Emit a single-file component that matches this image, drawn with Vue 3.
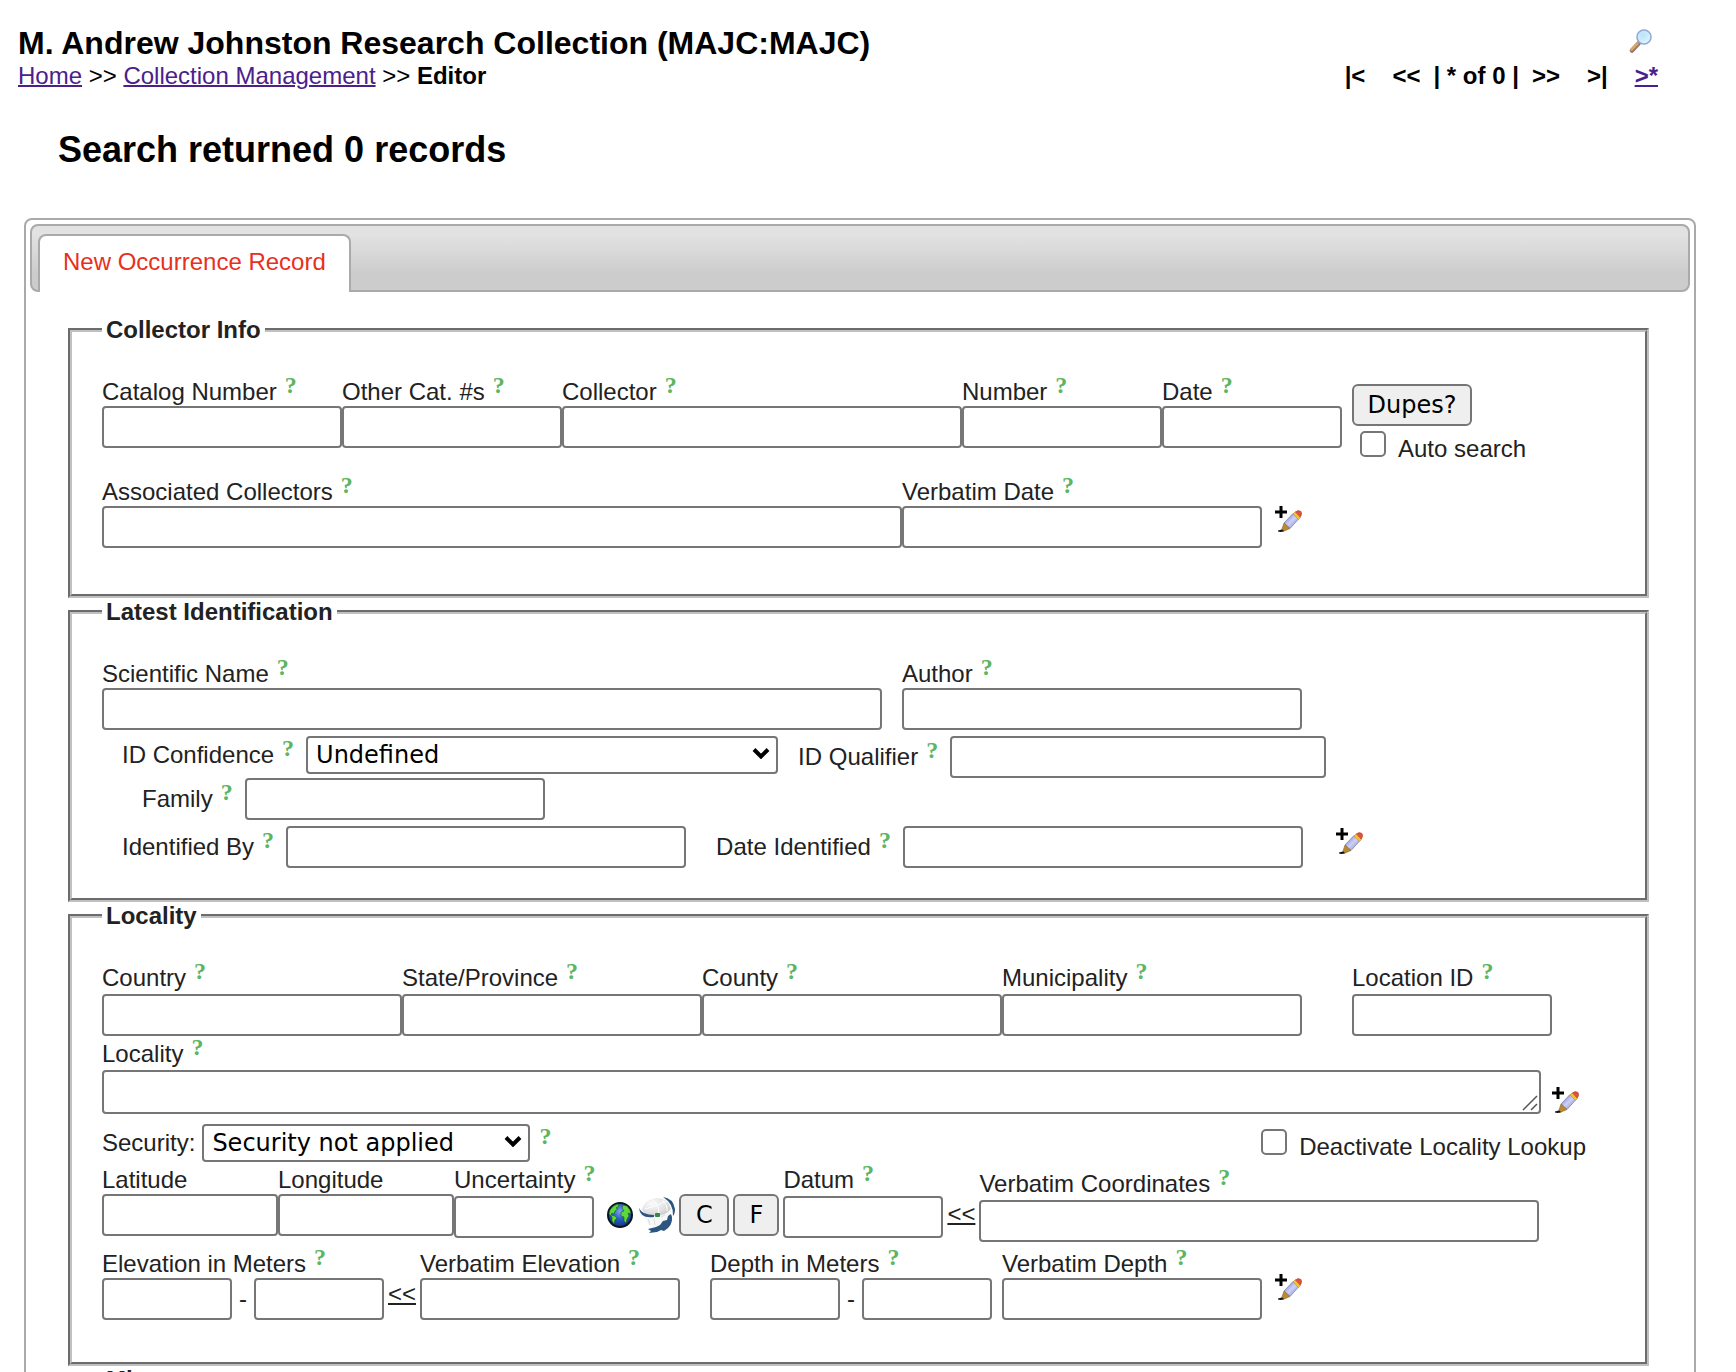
<script setup>
import { ref } from 'vue'

const collectorFields = [
  { id: 'catalognumber', label: 'Catalog Number', width: 240 },
  { id: 'othercatalognumbers', label: 'Other Cat. #s', width: 220 },
  { id: 'recordedby', label: 'Collector', width: 400 },
  { id: 'recordnumber', label: 'Number', width: 200 },
  { id: 'eventdate', label: 'Date', width: 180 },
]

const placeFields = [
  { id: 'country', label: 'Country' },
  { id: 'stateprovince', label: 'State/Province' },
  { id: 'county', label: 'County' },
  { id: 'municipality', label: 'Municipality' },
]

const confidence = ref('Undefined')
const security = ref('Security not applied')
const autoSearch = ref(false)
const deactivateLookup = ref(false)
</script>

<template>
  <div class="page">
    <svg class="sprite" width="0" height="0" aria-hidden="true">
      <defs>
        <linearGradient id="pencilBody" x1="0" y1="0" x2="1" y2="1">
          <stop offset="0.2" stop-color="#8f94d0" />
          <stop offset="0.5" stop-color="#cdd0f8" />
          <stop offset="0.9" stop-color="#8b8ec4" />
        </linearGradient>
        <symbol id="icon-edit" viewBox="0 0 28 28">
          <path d="M7 1v12M1 7h12" stroke="#000" stroke-width="3" />
          <path d="M10 18 19 8.500 25 13.500 16 23.500Z" fill="url(#pencilBody)" stroke="#7f82b0" stroke-width="0.800" />
          <path d="M19 9 21.500 6.500 27 12 24.500 14.500Z" fill="#f0c23a" stroke="#c8902a" stroke-width="0.600" />
          <path d="M21.500 7Q24 4.500 27 6.500Q29 9.500 26 12Z" fill="#e0523c" stroke="#b8463a" stroke-width="0.600" />
          <path d="M10 18 16 23.500 9 26.500 7.500 25.500Z" fill="#b98a34" stroke="#8a6420" stroke-width="0.600" />
          <path d="M4 25.500 8 24.500 10 26Q7 27.500 4 26.500Z" fill="#111" />
        </symbol>
        <symbol id="icon-chevron" viewBox="0 0 18 11">
          <path d="M2 1.500 9 8.500 16 1.500" fill="none" stroke="#000" stroke-width="4" />
        </symbol>
      </defs>
    </svg>

    <header class="top">
      <div>
        <h1>M. Andrew Johnston Research Collection (MAJC:MAJC)</h1>
        <nav class="crumbs" aria-label="Breadcrumb">
          <a href="#home">Home</a> &gt;&gt; <a href="#management">Collection Management</a> &gt;&gt; <b>Editor</b>
        </nav>
      </div>
      <div class="pager-block">
        <a class="search" href="#search" aria-label="Search">
          <svg width="24" height="24" viewBox="0 0 24 24">
            <defs>
              <radialGradient id="lens" cx="0.400" cy="0.350" r="0.700">
                <stop offset="0" stop-color="#b9e2fb" />
                <stop offset="0.600" stop-color="#cdeefd" />
                <stop offset="1" stop-color="#f2fbff" />
              </radialGradient>
            </defs>
            <path d="M9.500 14.500 3 21.500" stroke="#8d7a78" stroke-width="4.500" stroke-linecap="round" />
            <path d="M8.500 14.500 2.500 20.500" stroke="#e3a45a" stroke-width="2.500" stroke-linecap="round" />
            <circle cx="15" cy="8" r="7" fill="url(#lens)" stroke="#93a9cf" stroke-width="1.600" />
          </svg>
        </a>
        <nav class="pager" aria-label="Records">
          <span>|&lt;</span>
          <span>&lt;&lt;</span>
          <span class="count">| * of 0 |</span>
          <span>&gt;&gt;</span>
          <span>&gt;|</span>
          <a href="#new">&gt;*</a>
        </nav>
      </div>
    </header>

    <h2>Search returned 0 records</h2>

    <main class="tabs">
      <div class="tab-bar">
        <a class="tab" href="#occurrence">New Occurrence Record</a>
      </div>

      <form class="sections" @submit.prevent>
        <fieldset class="collector">
          <legend>Collector Info</legend>
          <div class="row">
            <div v-for="f in collectorFields" :key="f.id" class="field">
              <span class="caption">
                <label :for="f.id">{{ f.label }}</label><a class="help" href="#help" :aria-label="f.label + ' help'">?</a>
              </span>
              <input :id="f.id" type="text" :style="{ width: f.width + 'px' }" />
            </div>
            <div class="dupes">
              <button type="button">Dupes?</button>
              <label class="check auto"><input v-model="autoSearch" type="checkbox" />Auto search</label>
            </div>
          </div>
          <div class="row">
            <div class="field">
              <span class="caption"><label for="associated">Associated Collectors</label><a class="help" href="#help">?</a></span>
              <input id="associated" class="w-800" type="text" />
            </div>
            <div class="field">
              <span class="caption"><label for="verbatimdate">Verbatim Date</label><a class="help" href="#help">?</a></span>
              <input id="verbatimdate" class="w-360" type="text" />
            </div>
            <a class="edit" href="#more-dates" aria-label="Edit more"><svg width="28" height="28"><use href="#icon-edit" /></svg></a>
          </div>
        </fieldset>

        <fieldset class="identification">
          <legend>Latest Identification</legend>
          <div class="row wide">
            <div class="field">
              <span class="caption"><label for="sciname">Scientific Name</label><a class="help" href="#help">?</a></span>
              <input id="sciname" class="w-780" type="text" />
            </div>
            <div class="field">
              <span class="caption"><label for="author">Author</label><a class="help" href="#help">?</a></span>
              <input id="author" class="w-400" type="text" />
            </div>
          </div>
          <div class="row wide indent">
            <div class="inline">
              <label for="confidence">ID Confidence</label><a class="help" href="#help">?</a>
              <span class="select">
                <select id="confidence" v-model="confidence" class="w-472"><option>Undefined</option></select>
                <svg width="18" height="11"><use href="#icon-chevron" /></svg>
              </span>
            </div>
            <div class="inline">
              <label for="qualifier">ID Qualifier</label><a class="help" href="#help">?</a>
              <input id="qualifier" class="w-376" type="text" />
            </div>
          </div>
          <div class="row indent-more">
            <div class="inline">
              <label for="family">Family</label><a class="help" href="#help">?</a>
              <input id="family" class="w-300" type="text" />
            </div>
          </div>
          <div class="row indent identified">
            <div class="inline">
              <label for="identifiedby">Identified By</label><a class="help" href="#help">?</a>
              <input id="identifiedby" class="w-400" type="text" />
            </div>
            <div class="inline">
              <label for="dateidentified">Date Identified</label><a class="help" href="#help">?</a>
              <input id="dateidentified" class="w-400" type="text" />
            </div>
            <a class="edit" href="#more-identification" aria-label="Edit more"><svg width="28" height="28"><use href="#icon-edit" /></svg></a>
          </div>
        </fieldset>

        <fieldset class="locality">
          <legend>Locality</legend>
          <div class="row">
            <div v-for="f in placeFields" :key="f.id" class="field spaced">
              <span class="caption">
                <label :for="f.id">{{ f.label }}</label><a class="help" href="#help" :aria-label="f.label + ' help'">?</a>
              </span>
              <input :id="f.id" class="w-300" type="text" />
            </div>
            <div class="field spaced location-id">
              <span class="caption"><label for="locationid">Location ID</label><a class="help" href="#help">?</a></span>
              <input id="locationid" class="w-200" type="text" />
            </div>
          </div>

          <div class="row locality-row">
            <div class="field spaced grow">
              <span class="caption"><label for="locality">Locality</label><a class="help" href="#help">?</a></span>
              <span class="area">
                <textarea id="locality" rows="1"></textarea>
                <svg width="16" height="16" viewBox="0 0 16 16"><path d="M1 15 15 1M9 15 15 9" stroke="#555" stroke-width="1.500" /></svg>
              </span>
            </div>
            <a class="edit" href="#more-locality" aria-label="Edit more"><svg width="28" height="28"><use href="#icon-edit" /></svg></a>
          </div>

          <div class="row security">
            <div class="inline tight">
              <label for="security">Security:</label>
              <span class="select">
                <select id="security" v-model="security" class="w-328"><option>Security not applied</option></select>
                <svg width="18" height="11"><use href="#icon-chevron" /></svg>
              </span>
              <a class="help" href="#help">?</a>
            </div>
            <label class="check lookup"><input v-model="deactivateLookup" type="checkbox" />Deactivate Locality Lookup</label>
          </div>

          <div class="row coordinates">
            <div class="field">
              <span class="caption"><label for="latitude">Latitude</label></span>
              <input id="latitude" class="w-176" type="text" />
            </div>
            <div class="field">
              <span class="caption"><label for="longitude">Longitude</label></span>
              <input id="longitude" class="w-176" type="text" />
            </div>
            <div class="field spaced">
              <span class="caption"><label for="uncertainty">Uncertainty</label><a class="help" href="#help">?</a></span>
              <input id="uncertainty" class="w-140" type="text" />
            </div>
            <div class="tools">
              <a class="globe" href="#map" aria-label="Map">
                <svg width="26" height="26" viewBox="0 0 26 26">
                  <defs>
                    <radialGradient id="ocean" cx="0.500" cy="0.350" r="0.600">
                      <stop offset="0" stop-color="#7fa6ee" />
                      <stop offset="0.500" stop-color="#2b62c4" />
                      <stop offset="1" stop-color="#123a86" />
                    </radialGradient>
                  </defs>
                  <circle cx="13" cy="13" r="12" fill="url(#ocean)" stroke="#0a1420" stroke-width="2" />
                  <path d="M3 8Q6 3 11 2L12 4 9 6 11 7 8 9 7 12 5 11 4 13 8 14 10 16 8 18 7 22 5 19 5 15 2 12Z" fill="#5fd83c" stroke="#1d5a1a" stroke-width="0.600" />
                  <path d="M16 3 20 4 23 8 24 12 21 11 22 14 20 17 19 21 17 19 17 15 14 14 14 10 17 9 15 6Z" fill="#5fd83c" stroke="#1d5a1a" stroke-width="0.600" />
                </svg>
              </a>
              <a class="geo" href="#geolocate" aria-label="GeoLocate">
                <svg width="36" height="36" viewBox="0 0 36 36">
                  <defs>
                    <radialGradient id="shell" cx="0.350" cy="0.300" r="0.800">
                      <stop offset="0" stop-color="#fafafa" />
                      <stop offset="0.600" stop-color="#e2e2e2" />
                      <stop offset="1" stop-color="#c4c4c4" />
                    </radialGradient>
                  </defs>
                  <path d="M4 17Q8 31 20 31Q31 27 32 14Z" fill="#f8f8f8" />
                  <path d="M3 13Q5 2 18 1Q29 1 32 12Q26 19 17 19Q7 20 3 13Z" fill="url(#shell)" />
                  <path d="M6 12Q18 9 28 4M13 2Q20 8 20 16M23 3Q29 8 28 14" fill="none" stroke="#fff" stroke-width="1" />
                  <path d="M9 22 11 28M15 22 16 28M22 20 26 18" fill="none" stroke="#ddd" stroke-width="1" />
                  <path d="M0 11Q3 18 15 18L15 20Q1 22 0 11Z" fill="#2c557f" />
                  <path d="M24 0Q34 1 36 12Q36 17 34 19Q35 7 24 0Z" fill="#2c557f" />
                  <path d="M32 17 33 20Q34 29 25 34L22 33 18 35 10 36 12 34 9 32 17 30 21 28 24 24 28 23 29 19Z" fill="#2c557f" />
                  <rect x="16" y="16" width="5" height="4" rx="1" fill="#378745" />
                </svg>
              </a>
              <button class="c" type="button">C</button>
              <button class="f" type="button">F</button>
            </div>
            <div class="field spaced">
              <span class="caption"><label for="datum">Datum</label><a class="help" href="#help">?</a></span>
              <input id="datum" class="w-160" type="text" />
            </div>
            <a class="copy" href="#parse-coordinates">&lt;&lt;</a>
            <div class="field spaced verbatim">
              <span class="caption"><label for="verbatimcoordinates">Verbatim Coordinates</label><a class="help" href="#help">?</a></span>
              <input id="verbatimcoordinates" class="w-560" type="text" />
            </div>
          </div>

          <div class="row elevation">
            <div class="field">
              <span class="caption"><label for="minelevation">Elevation in Meters</label><a class="help" href="#help">?</a></span>
              <span class="range">
                <input id="minelevation" class="w-130" type="text" /><span>-</span><input class="w-130" type="text" aria-label="Maximum elevation" />
              </span>
            </div>
            <a class="copy" href="#parse-elevation">&lt;&lt;</a>
            <div class="field">
              <span class="caption"><label for="verbatimelevation">Verbatim Elevation</label><a class="help" href="#help">?</a></span>
              <input id="verbatimelevation" class="w-260" type="text" />
            </div>
            <div class="field depth">
              <span class="caption"><label for="mindepth">Depth in Meters</label><a class="help" href="#help">?</a></span>
              <span class="range">
                <input id="mindepth" class="w-130" type="text" /><span>-</span><input class="w-130" type="text" aria-label="Maximum depth" />
              </span>
            </div>
            <div class="field verbatim-depth">
              <span class="caption"><label for="verbatimdepth">Verbatim Depth</label><a class="help" href="#help">?</a></span>
              <input id="verbatimdepth" class="w-260" type="text" />
            </div>
            <a class="edit" href="#more-elevation" aria-label="Edit more"><svg width="28" height="28"><use href="#icon-edit" /></svg></a>
          </div>
        </fieldset>

        <fieldset class="misc">
          <legend>Misc</legend>
        </fieldset>
      </form>
    </main>
  </div>
</template>

<style>
html {
  background: #fff;
}
</style>

<style scoped>
.page {
  height: 100vh;
  overflow: hidden;
  color: #000;
  font-family: "Liberation Sans", Arial, sans-serif;
  font-size: 24px;
  line-height: 28px;
  white-space: nowrap;
}

.page *,
.page {
  box-sizing: border-box;
}

.sprite {
  position: absolute;
}

svg {
  display: block;
}

.top {
  display: flex;
  justify-content: space-between;
  align-items: flex-end;
  padding: 24px 78px 0 18px;
}

h1 {
  margin: 0;
  font-size: 32px;
  line-height: 38px;
}

h2 {
  margin: 39px 0 47px 58px;
  font-size: 36px;
  line-height: 42px;
}

.top a {
  color: #4b208c;
  text-decoration-thickness: 2px;
}

.pager-block {
  display: flex;
  flex-direction: column;
  align-items: flex-end;
  gap: 9px;
}

.search {
  margin-right: 5px;
}

.pager {
  display: flex;
  gap: 27px;
  font-weight: bold;
}

.count {
  margin: 0 -14px;
}

.tabs {
  margin: 0 40px 0 24px;
  padding: 4px;
  border: 2px solid #aaa;
  border-radius: 8px;
}

.tab-bar {
  display: flex;
  height: 68px;
  padding: 8px 6px 0;
  border: 2px solid #aaa;
  border-radius: 8px;
  background: linear-gradient(#e2e2e2 0%, #e2e2e2 14%, #ccc 75%, #ccc 100%);
}

.tab {
  height: 58px;
  padding: 12px 23px 0;
  border: 2px solid #aaa;
  border-bottom: 0;
  border-radius: 8px 8px 0 0;
  background: #fff;
  color: #e8301c;
  text-decoration: none;
}

.sections {
  padding: 24px 41px 0 38px;
  color: #222;
}

fieldset {
  margin: 0;
  padding: 34px 30px 0;
  border: 4px groove #c0c0c0;
}

legend {
  padding: 0 4px;
  font-weight: bold;
}

.collector {
  padding-bottom: 46px;
}

.identification {
  padding-bottom: 30px;
}

.locality {
  padding-bottom: 42px;
}

.row {
  display: flex;
  align-items: flex-start;
}

.wide {
  gap: 20px;
  margin-bottom: 6px;
}

.indent.wide {
  margin-bottom: 0;
}

.collector .row + .row {
  margin-top: 30px;
}

.field {
  display: flex;
  flex-direction: column;
}

.caption {
  height: 28px;
}

.spaced .caption {
  height: 30px;
}

.help {
  margin-left: 8px;
  color: #5cb55f;
  font-family: "Liberation Serif", "Times New Roman", serif;
  font-weight: bold;
  line-height: 0;
  text-decoration: none;
  vertical-align: 7px;
}

input[type="text"],
textarea,
select,
button {
  display: block;
  margin: 0;
  border: 2px solid #767676;
  border-radius: 4px;
  background: #fff;
  color: #000;
  font-family: "DejaVu Sans", Verdana, sans-serif;
  font-size: 24px;
}

input[type="text"] {
  height: 42px;
  padding: 0 4px;
}

textarea {
  width: 100%;
  height: 44px;
  padding: 4px;
  resize: none;
  overflow: hidden;
}

select {
  height: 38px;
  padding: 0 30px 0 8px;
  appearance: none;
}

button {
  height: 42px;
  padding: 0;
  border-radius: 6px;
  background: #efefef;
}

.select,
.area {
  position: relative;
}

.select svg {
  position: absolute;
  top: 12px;
  right: 8px;
  pointer-events: none;
}

.area svg {
  position: absolute;
  right: 3px;
  bottom: 3px;
  pointer-events: none;
}

.inline {
  display: flex;
  align-items: baseline;
}

.inline .help {
  position: relative;
  bottom: 7px;
  margin-right: 12px;
}

.tight {
  gap: 7px;
}

.tight .help {
  margin: 0 0 0 2px;
}

.indent {
  padding-left: 20px;
}

.indent-more {
  padding-left: 40px;
}

.identified {
  gap: 30px;
  margin-top: 6px;
}

.dupes {
  display: flex;
  flex-direction: column;
  gap: 5px;
  margin: 6px 0 -16px 10px;
}

.dupes button {
  width: 120px;
}

.check {
  display: flex;
  align-items: baseline;
  gap: 12px;
}

.check input {
  width: 26px;
  height: 26px;
  margin: 0;
  border: 2px solid #767676;
  border-radius: 5px;
  background: #fff;
  appearance: none;
}

.check input:checked {
  background: #767676;
}

.auto {
  margin-left: 8px;
}

.edit {
  margin: 27px 0 0 12px;
}

.identified .edit {
  margin: 1px 0 0 2px;
}

.location-id {
  margin-left: 50px;
}

.locality-row {
  align-items: flex-end;
  margin: 4px 36px 10px 0;
}

.locality-row .edit {
  margin-left: 10px;
}

.grow {
  flex: 1;
}

.security {
  justify-content: space-between;
  padding-right: 29px;
}

.lookup {
  margin-top: 5px;
}

.coordinates,
.elevation {
  margin-top: 4px;
}

.tools {
  display: flex;
  align-items: center;
  gap: 4px;
  margin: 28px 4px 0 12px;
}

.geo {
  margin-left: 2px;
}

.c {
  width: 50px;
}

.f {
  width: 46px;
}

.copy {
  width: 36px;
  padding-top: 34px;
  color: #222;
  text-align: center;
  text-decoration-thickness: 2px;
}

.verbatim {
  margin-top: 4px;
}

.elevation {
  margin-top: 8px;
}

.elevation .copy {
  padding-top: 30px;
}

.range {
  display: flex;
  align-items: baseline;
}

.range span {
  width: 22px;
  text-align: center;
}

.depth {
  margin-left: 30px;
}

.verbatim-depth {
  margin-left: 10px;
}

.elevation .edit {
  margin-top: 23px;
}

.w-130 { width: 130px; }
.w-140 { width: 140px; }
.w-160 { width: 160px; }
.w-176 { width: 176px; }
.w-200 { width: 200px; }
.w-260 { width: 260px; }
.w-300 { width: 300px; }
.w-328 { width: 328px; }
.w-360 { width: 360px; }
.w-376 { width: 376px; }
.w-400 { width: 400px; }
.w-472 { width: 472px; }
.w-560 { width: 560px; }
.w-780 { width: 780px; }
.w-800 { width: 800px; }
</style>
